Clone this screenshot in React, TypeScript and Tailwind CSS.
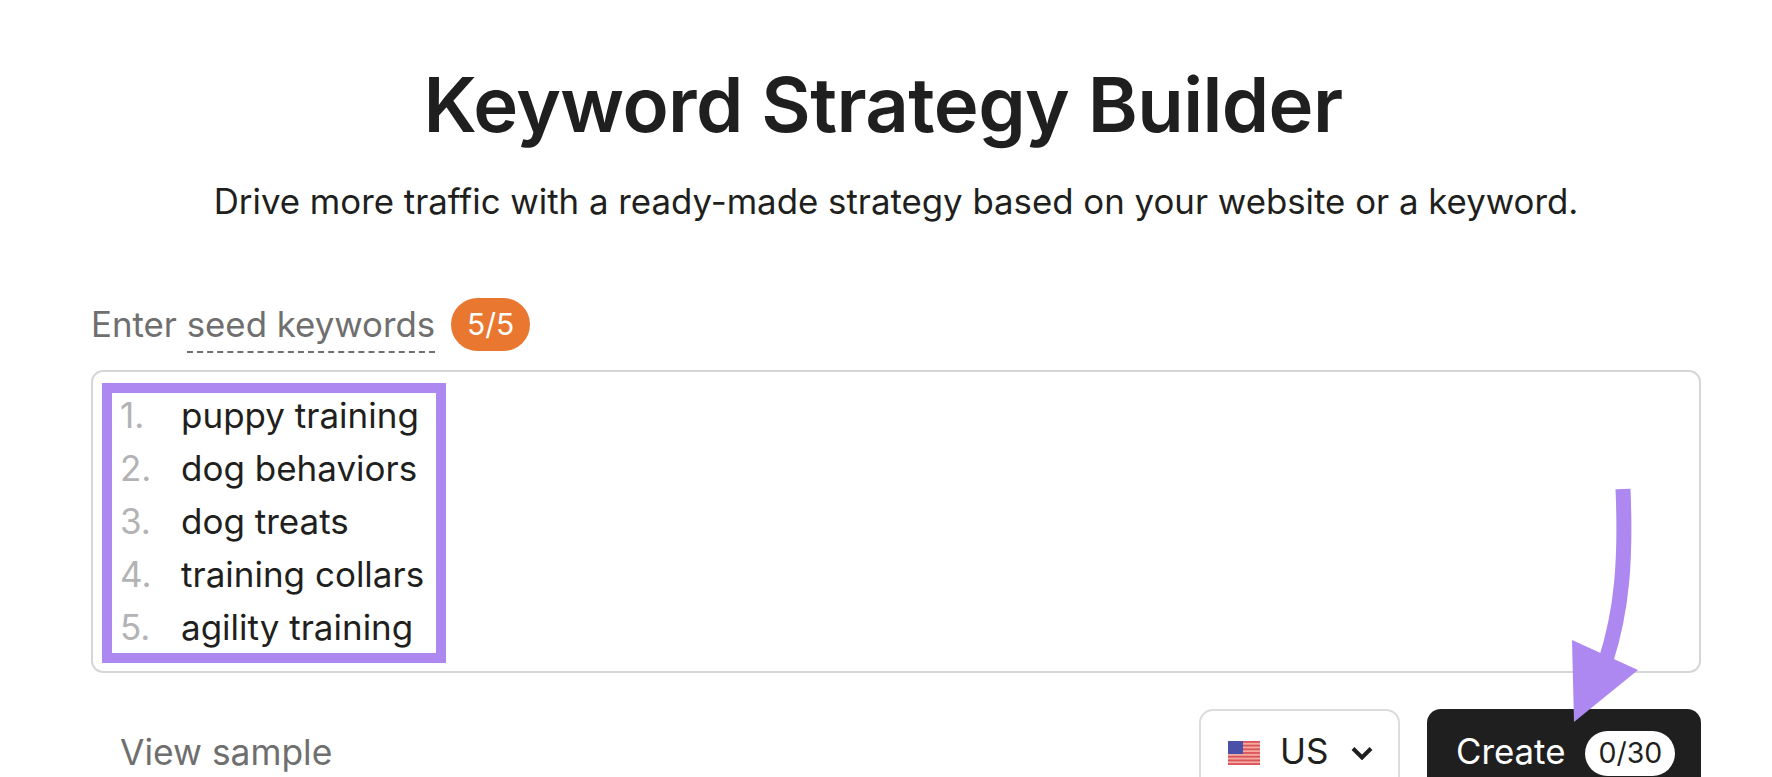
const keywords = ["puppy training", "dog behaviors", "dog treats", "training collars", "agility training"];

const inter = "font-['Inter','Liberation_Sans',sans-serif]";

// ── Small US flag ─────────────────────────────────────────────
function Flag() {
  return (
    <svg width="32" height="24" viewBox="0 0 32 24" className="shrink-0">
      <rect width="32" height="24" fill="#f3a9a0" />
      {[0, 1, 2, 3, 4, 5, 6].map((i) => (
        <rect key={i} y={i * 3.7} width="32" height="1.8" fill="#d9545a" />
      ))}
      <rect width="15" height="13" fill="#4a4fa8" />
    </svg>
  );
}

export default function App() {
  return (
    <div className={`relative h-[777px] w-[1772px] overflow-hidden bg-white ${inter}`}>
      <div className="flex flex-col items-center pt-[51px]">
        <h1 className="mr-[6px] text-[76px] leading-[106px] font-semibold tracking-[-0.6px] text-[#1f1f20]">
          Keyword Strategy Builder
        </h1>
        <p className="mt-[21px] ml-[20px] text-[34.8px] leading-[46px] text-[#1f1f20]">
          Drive more traffic with a ready-made strategy based on your website or a keyword.
        </p>
      </div>

      <div className="mt-[73px] ml-[91px] w-[1610px]">
        <div className="flex h-[54px] items-center">
          <span className="text-[34.8px] leading-[44px] text-[#6f6f6f]">
            Enter{" "}
            <span className="border-b-2 border-dashed border-[#6f6f6f] pb-[6px]">seed keywords</span>
          </span>
          <span className="ml-[16px] flex h-[53px] w-[79px] items-center justify-center rounded-full bg-[#e97730] text-[30px] text-white">
            5/5
          </span>
        </div>

        <div className="mt-[19px] h-[303px] rounded-[12px] border-2 border-[#d6d6d8] pt-[11px] pl-[9px]">
          <div className="h-[280px] w-[344px] border-[10px] border-[#ad88f1] pl-[8px]">
            <ol className="-mt-[4px]">
              {keywords.map((k, i) => (
                <li key={k} className="flex h-[52.9px] items-center text-[35px]">
                  <span className="w-[61px] text-[#b3b3b5]">{i + 1}.</span>
                  <span className="text-[#1f1f20]">{k}</span>
                </li>
              ))}
            </ol>
          </div>
        </div>

        <div className="mt-[36px] flex items-start">
          <span className="mt-[22px] ml-[29px] text-[35.4px] leading-[44px] text-[#6f6f6f]">View sample</span>
          <div className="ml-auto flex h-[90px] w-[201px] items-start rounded-[14px] border-2 border-[#dcdcde] pt-[17px] pl-[27px]">
            <div className="mt-[13px]">
              <Flag />
            </div>
            <span className="ml-[20px] text-[35px] leading-[46px] text-[#1f1f20]">US</span>
            <svg width="22" height="14" viewBox="0 0 22 14" className="mt-[18px] ml-[22px]" fill="none">
              <path d="M2 2.5l9 9 9-9" stroke="#1f1f20" strokeWidth="4" />
            </svg>
          </div>
          <div className="ml-[27px] flex h-[90px] w-[274px] items-start rounded-[14px] bg-[#1f1f20] pt-[20px] pl-[29px]">
            <span className="text-[34.8px] leading-[44px] text-white">Create</span>
            <span className="ml-[20px] mt-[2px] flex h-[45px] w-[90px] items-center justify-center rounded-full bg-white text-[28.5px] text-[#1f1f20]">
              0/30
            </span>
          </div>
        </div>
      </div>

      {/* annotation arrow */}
      <svg className="absolute top-0 left-0" width="1772" height="777" fill="none">
        <path d="M1623 489C1626 560 1622 610 1606 660" stroke="#ad88f1" strokeWidth="15" />
        <path d="M1572 640L1638 670L1574 722Z" fill="#ad88f1" />
      </svg>
    </div>
  );
}
